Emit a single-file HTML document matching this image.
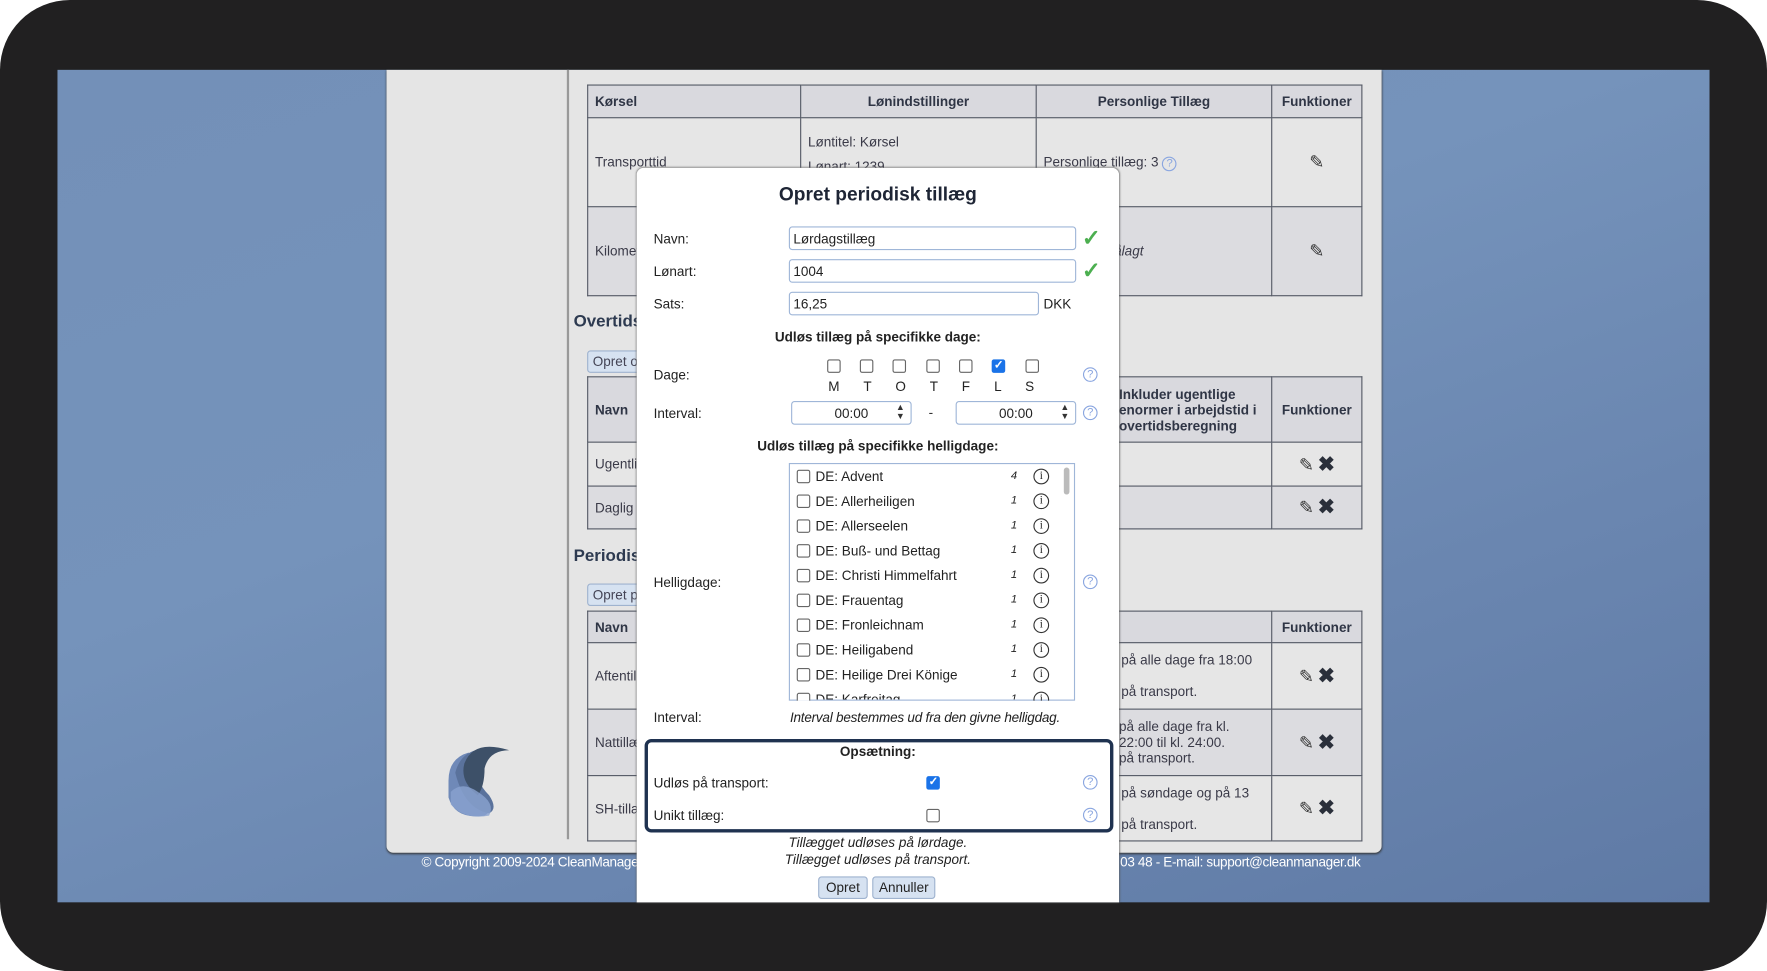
<!DOCTYPE html>
<html><head><meta charset="utf-8"><style>
*{box-sizing:border-box;margin:0;padding:0}
html,body{width:1767px;height:971px;overflow:hidden;background:#fff}
#w{position:absolute;left:0;top:0;width:1568px;height:862px;transform:scale(1.12691,1.1265);transform-origin:0 0;font-family:"Liberation Sans",sans-serif;font-size:12px;color:#333;background:#fff}
.a{position:absolute}
.frame{left:0;top:0;width:1568px;height:862px;background:#212021;border-radius:62px}
.blue{left:51px;top:62px;width:1466px;height:739px;background:linear-gradient(160deg,#7390b8 0%,#7593bb 40%,#6a86b0 70%,#5f7aa5 100%)}
.panel{left:343px;top:62px;width:883px;height:695px;background:#e5e5e5;border-radius:0 0 6px 6px;box-shadow:0 1px 2px #333}
.vl{left:503px;top:62px;width:2px;height:683px;background:#999}
table{border-collapse:collapse;position:absolute;font-size:12px;color:#3a3a48}
td,th{border:1px solid #555a66;padding:0 6px}
th{background:#d9d9de;font-weight:bold;color:#2f3545}
.r1{background:#e6e6e6}.r2{background:#dcdce0}
h3{position:absolute;font-size:15px;color:#2d3a50;font-weight:bold}
.btn{position:absolute;border:1px solid #9fb3cf;background:#d6e2f1;border-radius:3px;font-size:12px;color:#445;padding:2px 4px;height:20px}
.modal{left:565px;top:149px;width:428px;height:652px;background:#fff;border-radius:6px 6px 0 0;box-shadow:0 0 2px #555}
.lbl{position:absolute;left:15px;color:#222}
.inp{position:absolute;border:1px solid #9fb6d8;border-radius:3px;height:21px;padding:3px;font-size:12px;color:#222;background:#fff}
.ck{position:absolute;color:#4caf50;font-size:20px;font-weight:bold}
.cb{position:absolute;width:12px;height:12px;border:1px solid #666;border-radius:2px;background:#fff}
.cb.on{background:#1a73e8;border-color:#1a73e8}
.cb.on:after{content:"✓";color:#fff;font-size:10px;position:absolute;left:1px;top:-1px;font-weight:bold}
.help{position:absolute;width:13px;height:13px;border:1px solid #8aa6e0;border-radius:50%;color:#8aa6e0;font-size:10px;text-align:center;line-height:12px}
.info{position:absolute;width:14px;height:14px;border:1.5px solid #333;border-radius:50%;font-size:10px;text-align:center;line-height:11px;font-family:"Liberation Serif",serif;color:#222}
.b{font-weight:bold;color:#222}
.c{text-align:center}
.ic{font-size:16px;color:#333}
.x{font-size:18px;font-weight:bold;color:#2a2f3a}
</style></head><body><div id="w">
<div class="a frame"></div>
<div class="a blue"></div>
<div class="a panel"></div>
<div class="a vl"></div>
<!-- logo -->
<svg class="a" style="left:390px;top:648px" width="70" height="80" viewBox="0 0 70 80">
<path d="M8 45 Q8 25 26 20 Q22 45 38 62 Q48 72 40 76 Q14 80 8 60Z" fill="#6f89b8"/>
<path d="M14 38 Q18 22 32 18 Q28 42 44 58 Q52 70 44 74 Q22 70 14 38Z" fill="#5a729c"/>
<path d="M22 30 Q30 8 62 18 Q44 18 40 34 Q40 50 34 58 Q18 46 22 30Z" fill="#3d5068"/>
<path d="M10 55 Q20 45 34 55 Q50 65 44 76 Q22 80 10 66Z" fill="#8aa2cf" opacity=".8"/>
</svg>
<table style="left:521px;top:75px;width:688px">
<tr style="height:29px"><th style="width:189px;text-align:left">Kørsel</th><th style="width:209px">Lønindstillinger</th><th style="width:209px">Personlige Tillæg</th><th>Funktioner</th></tr>
<tr class="r1" style="height:79px"><td>Transporttid</td><td style="vertical-align:top;padding-top:10px;line-height:22px">Løntitel: Kørsel<br>Lønart: 1239</td><td>Personlige tillæg: 3 <span class="help" style="position:relative;display:inline-block">?</span></td><td class="c ic">✎</td></tr>
<tr class="r2" style="height:79px"><td>Kilometer</td><td></td><td style="padding-left:62px"><i>pålagt</i></td><td class="c ic">✎</td></tr>
</table>
<h3 style="left:509px;top:277px">Overtidsregler</h3>
<div class="btn" style="left:521px;top:311px">Opret overtid</div>
<table style="left:521px;top:334px;width:688px">
<tr style="height:58px"><th style="text-align:left;width:469px">Navn</th><th style="text-align:left;padding-left:2px;width:138px">Inkluder ugentlige<br>enormer i arbejdstid i<br>overtidsberegning</th><th>Funktioner</th></tr>
<tr class="r1" style="height:39px"><td>Ugentlig</td><td></td><td class="c"><span class="ic">✎</span> <span class="x">✖</span></td></tr>
<tr class="r2" style="height:38px"><td>Daglig</td><td></td><td class="c"><span class="ic">✎</span> <span class="x">✖</span></td></tr>
</table>
<h3 style="left:509px;top:485px">Periodiske tillæg</h3>
<div class="btn" style="left:521px;top:518px">Opret periodisk</div>
<table style="left:521px;top:542px;width:688px">
<tr style="height:28px"><th style="text-align:left;width:469px">Navn</th><th style="width:138px"></th><th>Funktioner</th></tr>
<tr class="r1" style="height:59px"><td>Aftentillæg</td><td style="padding-left:4px">på alle dage fra 18:00<br><br>på transport.</td><td class="c"><span class="ic">✎</span> <span class="x">✖</span></td></tr>
<tr class="r2" style="height:59px"><td>Nattillæg</td><td style="padding-left:2px">på alle dage fra kl.<br>22:00 til kl. 24:00.<br>på transport.</td><td class="c"><span class="ic">✎</span> <span class="x">✖</span></td></tr>
<tr class="r1" style="height:58px"><td>SH-tillæg</td><td style="padding-left:4px">på søndage og på 13<br><br>på transport.</td><td class="c"><span class="ic">✎</span> <span class="x">✖</span></td></tr>
</table>
<div class="a" style="left:374px;top:758px;color:#fff;font-size:12px;width:822px;white-space:nowrap;letter-spacing:-0.3px">© Copyright 2009-2024 CleanManager ApS<span style="position:absolute;left:620px">03 48 - E-mail: support@cleanmanager.dk</span></div>

<div class="a modal">
<div class="a b c" style="left:0;top:14px;width:428px;font-size:17px;color:#1e2535">Opret periodisk tillæg</div>
<div class="lbl" style="top:56px">Navn:</div>
<div class="inp" style="left:135px;top:52px;width:255px">Lørdagstillæg</div><div class="ck" style="left:395px;top:50px">✓</div>
<div class="lbl" style="top:85px">Lønart:</div>
<div class="inp" style="left:135px;top:81px;width:255px">1004</div><div class="ck" style="left:395px;top:79px">✓</div>
<div class="lbl" style="top:114px">Sats:</div>
<div class="inp" style="left:135px;top:110px;width:222px">16,25</div><div class="a" style="left:361px;top:114px;color:#222">DKK</div>
<div class="a b c" style="left:0;top:143px;width:428px">Udløs tillæg på specifikke dage:</div>
<div class="lbl" style="top:177px">Dage:</div>
<div class="cb" style="left:169px;top:170px"></div><div class="cb" style="left:198px;top:170px"></div><div class="cb" style="left:227px;top:170px"></div><div class="cb" style="left:257px;top:170px"></div><div class="cb" style="left:286px;top:170px"></div><div class="cb on" style="left:315px;top:170px"></div><div class="cb" style="left:345px;top:170px"></div>
<div class="a" style="left:170px;top:187px;color:#222;word-spacing:18px;letter-spacing:0">M T O T F L S</div>
<div class="help" style="left:396px;top:177px">?</div>
<div class="lbl" style="top:211px">Interval:</div>
<div class="inp c" style="left:137px;top:207px;width:107px">00:00</div><div class="a" style="left:230px;top:209px;font-size:8px;line-height:8px">▲<br>▼</div>
<div class="a" style="left:259px;top:210px">-</div>
<div class="inp c" style="left:283px;top:207px;width:107px">00:00</div><div class="a" style="left:376px;top:209px;font-size:8px;line-height:8px">▲<br>▼</div>
<div class="help" style="left:396px;top:211px">?</div>
<div class="a b c" style="left:0;top:240px;width:428px">Udløs tillæg på specifikke helligdage:</div>
<div class="a" style="left:135px;top:262px;width:254px;height:211px;border:1px solid #9fb6d8;overflow:hidden">
<div class="a" style="right:4px;top:3px;width:5px;height:24px;background:#bbb;border-radius:3px"></div>
<div style="position:absolute;left:6px;top:0px;width:230px;line-height:22px;color:#222">
<div style="position:relative">&nbsp;&nbsp;&nbsp;&nbsp;&nbsp;DE: Advent<i class="a" style="left:190px;font-size:10px">4</i></div>
<div style="position:relative">&nbsp;&nbsp;&nbsp;&nbsp;&nbsp;DE: Allerheiligen<i class="a" style="left:190px;font-size:10px">1</i></div>
<div style="position:relative">&nbsp;&nbsp;&nbsp;&nbsp;&nbsp;DE: Allerseelen<i class="a" style="left:190px;font-size:10px">1</i></div>
<div style="position:relative">&nbsp;&nbsp;&nbsp;&nbsp;&nbsp;DE: Buß- und Bettag<i class="a" style="left:190px;font-size:10px">1</i></div>
<div style="position:relative">&nbsp;&nbsp;&nbsp;&nbsp;&nbsp;DE: Christi Himmelfahrt<i class="a" style="left:190px;font-size:10px">1</i></div>
<div style="position:relative">&nbsp;&nbsp;&nbsp;&nbsp;&nbsp;DE: Frauentag<i class="a" style="left:190px;font-size:10px">1</i></div>
<div style="position:relative">&nbsp;&nbsp;&nbsp;&nbsp;&nbsp;DE: Fronleichnam<i class="a" style="left:190px;font-size:10px">1</i></div>
<div style="position:relative">&nbsp;&nbsp;&nbsp;&nbsp;&nbsp;DE: Heiligabend<i class="a" style="left:190px;font-size:10px">1</i></div>
<div style="position:relative">&nbsp;&nbsp;&nbsp;&nbsp;&nbsp;DE: Heilige Drei Könige<i class="a" style="left:190px;font-size:10px">1</i></div>
<div style="position:relative">&nbsp;&nbsp;&nbsp;&nbsp;&nbsp;DE: Karfreitag<i class="a" style="left:190px;font-size:10px">1</i></div>
</div>
</div>
<div class="lbl" style="top:361px">Helligdage:</div>
<div class="help" style="left:396px;top:361px">?</div>
<div class="lbl" style="top:481px">Interval:</div>
<i class="a" style="left:136px;top:481px;color:#222;letter-spacing:-0.2px">Interval bestemmes ud fra den givne helligdag.</i>
<div class="a" style="left:7px;top:507px;width:416px;height:83px;border:3px solid #1f3250;border-radius:6px"></div>
<div class="a b c" style="left:0;top:511px;width:428px">Opsætning:</div>
<div class="lbl" style="top:539px">Udløs på transport:</div><div class="cb on" style="left:257px;top:540px"></div><div class="help" style="left:396px;top:539px">?</div>
<div class="lbl" style="top:568px">Unikt tillæg:</div><div class="cb" style="left:257px;top:569px"></div><div class="help" style="left:396px;top:568px">?</div>
<i class="a c" style="left:0;top:592px;width:428px;color:#222;line-height:15px">Tillægget udløses på lørdage.<br>Tillægget udløses på transport.</i>
<div class="btn" style="left:161px;top:629px;width:44px;text-align:center;color:#222">Opret</div>
<div class="btn" style="left:209px;top:629px;width:56px;text-align:center;color:#222">Annuller</div>
</div>
<!-- list checkboxes & info icons -->
<div class="cb" style="left:707px;top:417px"></div><div class="info" style="left:917px;top:416px">i</div>
<div class="cb" style="left:707px;top:439px"></div><div class="info" style="left:917px;top:438px">i</div>
<div class="cb" style="left:707px;top:461px"></div><div class="info" style="left:917px;top:460px">i</div>
<div class="cb" style="left:707px;top:483px"></div><div class="info" style="left:917px;top:482px">i</div>
<div class="cb" style="left:707px;top:505px"></div><div class="info" style="left:917px;top:504px">i</div>
<div class="cb" style="left:707px;top:527px"></div><div class="info" style="left:917px;top:526px">i</div>
<div class="cb" style="left:707px;top:549px"></div><div class="info" style="left:917px;top:548px">i</div>
<div class="cb" style="left:707px;top:571px"></div><div class="info" style="left:917px;top:570px">i</div>
<div class="cb" style="left:707px;top:593px"></div><div class="info" style="left:917px;top:592px">i</div>
<div class="a" style="left:701px;top:612px;width:244px;height:10px;overflow:hidden"><div class="cb" style="left:6px;top:3px"></div><div class="info" style="left:216px;top:2px">i</div></div>
</div></body></html>
